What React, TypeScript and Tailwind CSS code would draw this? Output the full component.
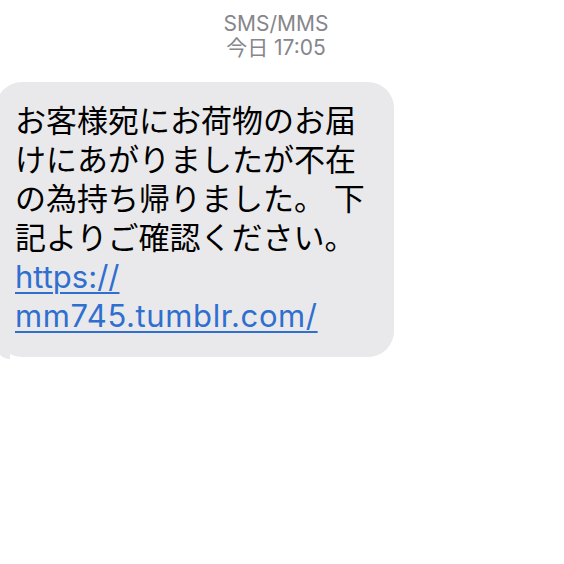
import React from 'react';

const lines = [
  'お客様宛にお荷物のお届',
  'けにあがりましたが不在',
  'の為持ち帰りました。 下',
  '記よりご確認ください。',
];

export default function App() {
  return (
    <div
      className="w-[564px] h-[564px] bg-white overflow-hidden"
      style={{ fontFamily: 'Inter, "Noto Sans CJK JP", sans-serif' }}
    >
      <div className="pt-[12px] flex flex-col items-center pr-[12px] text-[#86868b] text-[21px] leading-[24px]">
        <div>SMS/MMS</div>
        <div>今日 17:05</div>
      </div>

      <div className="relative mt-[22px] -ml-[4px] w-[398px] rounded-[26px] bg-[#e9e9eb] pl-[19px] pt-[19px] pb-[22px]">
        <div className="text-[31px] leading-[39px] text-black whitespace-nowrap">
          {lines.map((l) => (
            <div key={l}>{l}</div>
          ))}
          <a href="#" className="block text-[#2f6fcf] underline decoration-[1.5px] underline-offset-[4px]">
            https://
          </a>
          <a
            href="#"
            className="block text-[#2f6fcf] tracking-[0.6px] underline decoration-[1.5px] underline-offset-[4px]"
          >
            mm745.tumblr.com/
          </a>
        </div>
        <div className="absolute left-0 bottom-[-2px] w-[14px] h-[16px] rounded-bl-[14px] bg-[#e9e9eb]" />
      </div>
    </div>
  );
}
